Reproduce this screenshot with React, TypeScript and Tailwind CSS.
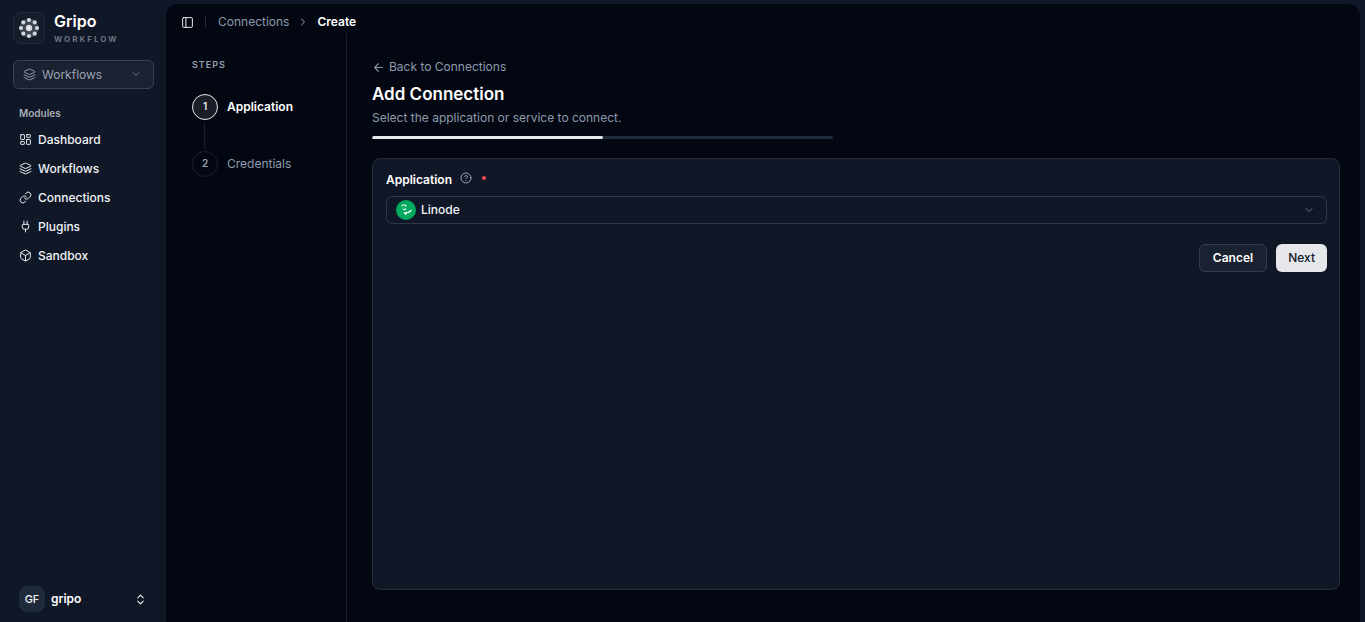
import type { ReactNode } from "react";
import {
  ArrowLeft,
  Box,
  ChevronDown,
  ChevronRight,
  ChevronsUpDown,
  CircleHelp,
  Layers,
  LayoutDashboard,
  Link as LinkIcon,
  PanelLeft,
  Plug,
} from "lucide-react";

const modules = [
  { label: "Dashboard", icon: LayoutDashboard },
  { label: "Workflows", icon: Layers },
  { label: "Connections", icon: LinkIcon },
  { label: "Plugins", icon: Plug },
  { label: "Sandbox", icon: Box },
];

const petals = [
  [12, 4],
  [17.7, 6.3],
  [20, 12],
  [17.7, 17.7],
  [12, 20],
  [6.3, 17.7],
  [4, 12],
  [6.3, 6.3],
];

function GripoMark() {
  return (
    <svg viewBox="0 0 24 24" className="size-6" aria-hidden="true">
      <circle cx="12" cy="12" r="9.5" fill="#e5e7eb" opacity="0.2" />
      <g fill="#d3d6dc">
        {petals.map(([cx, cy]) => (
          <circle key={`${cx}-${cy}`} cx={cx} cy={cy} r="2.1" />
        ))}
        <circle cx="12" cy="12" r="3.2" />
      </g>
      <circle cx="12" cy="12" r="1.2" fill="#ffffff" />
    </svg>
  );
}

function LinodeMark() {
  return (
    <svg viewBox="0 0 20 20" className="size-5" aria-hidden="true">
      <circle cx="10" cy="10" r="10" fill="#00a95c" />
      <g fill="#ffffff">
        <path d="M5 5.400 7.800 4.300l.8.700-2.700 1.300z" />
        <path d="M8.600 4.300l1.700.6.1 1.400-1.600.4z" />
        <path d="M5.700 7.200l.9.500.2 1.300-.8-.5z" />
        <path d="M6.900 9.200l3-.9.200 1.200-1.900.9z" />
        <path d="M7.600 11.800l1.500.9 1.400-1.200 1 .8 3.900-2.900.2 1.500-3.100 2.400-1-.6-1.500 2.200L8 13.400z" />
      </g>
    </svg>
  );
}

function Sidebar() {
  return (
    <aside className="flex w-[166px] shrink-0 flex-col px-3 pt-3 pb-2">
      <div className="flex items-start gap-[9px] pl-px">
        <div className="flex size-8 items-center justify-center rounded-lg border border-[#232b3a] bg-[#151c2b]">
          <GripoMark />
        </div>
        <div className="flex flex-col gap-1 pt-px">
          <span className="text-base leading-4 font-semibold text-white">Gripo</span>
          <span className="text-[8px] leading-3 font-bold tracking-[2px] text-[#6a7282]">
            WORKFLOW
          </span>
        </div>
      </div>

      <div className="relative mt-[15px] ml-px w-[141px] text-[#99a1af]">
        <Layers className="pointer-events-none absolute top-2 left-2.5 size-[13px]" strokeWidth={1.75} />
        <select
          aria-label="Workspace area"
          className="h-[29px] w-full appearance-none rounded-md border border-[#3a4251] bg-[#1a2130] pr-6 pl-7 text-xs outline-none"
        >
          <option>Workflows</option>
        </select>
        <ChevronDown className="pointer-events-none absolute top-2 right-3 size-3 opacity-70" />
      </div>

      <nav aria-label="Modules" className="mt-4 px-1.5">
        <h2 className="pl-px text-[10px] leading-4 font-semibold text-[#a8acb4]">Modules</h2>
        <ul className="mt-1">
          {modules.map(({ label, icon: Icon }) => (
            <li key={label}>
              <a href="#" className="flex h-[29px] items-center gap-1.5 pl-px text-xs font-medium text-[#f3f4f6]">
                <Icon className="size-[13px]" strokeWidth={1.75} />
                {label}
              </a>
            </li>
          ))}
        </ul>
      </nav>

      <button type="button" className="mt-auto flex items-center gap-1.5 py-0.5 pr-[7px] pl-[7px] text-left">
        <span className="flex size-[26px] items-center justify-center rounded-lg bg-[#1e2939] text-[11px] font-medium text-[#f3f4f6]">
          GF
        </span>
        <span className="flex-1 text-xs font-semibold text-white">gripo</span>
        <ChevronsUpDown className="size-[13px] text-[#f3f4f6]" />
      </button>
    </aside>
  );
}

function Step({ number, active, children }: { number: number; active?: boolean; children: ReactNode }) {
  return (
    <div className="flex items-center gap-[9px]">
      <span
        className={
          active
            ? "flex size-[26px] items-center justify-center rounded-full border border-[#e5e7eb] bg-[#1b1e28] pb-0.5 text-[10px] font-semibold text-[#e5e7eb]"
            : "flex size-[26px] items-center justify-center rounded-full border border-[#1b202b] pb-0.5 text-[10px] font-semibold text-[#99a1af]"
        }
      >
        {number}
      </span>
      <span className={active ? "text-xs font-semibold text-white" : "text-xs text-[#8f9bad]"}>{children}</span>
    </div>
  );
}

function Steps() {
  return (
    <aside className="w-[181px] shrink-0 border-r border-[#191e29] pt-6 pl-[26px]">
      <h2 className="text-[9px] leading-4 font-semibold tracking-[1px] text-[#99a1af]">STEPS</h2>
      <ol className="mt-[21px]">
        <li>
          <Step number={1} active>
            Application
          </Step>
          <div className="my-[3px] ml-3 h-[25px] w-px bg-[#1b202b]" />
        </li>
        <li>
          <Step number={2}>Credentials</Step>
        </li>
      </ol>
    </aside>
  );
}

function ConnectionForm() {
  return (
    <form
      onSubmit={(e) => e.preventDefault()}
      className="mt-[19px] flex-1 rounded-lg border border-[#252d3b] bg-[#101828] py-2.5 pr-3 pl-[13px]"
    >
      <div className="flex h-[18px] items-center gap-2">
        <label htmlFor="application" className="pt-1 text-xs font-semibold text-white">
          Application
        </label>
        <CircleHelp className="size-3 text-[#99a1af]" />
        <span className="ml-0.5 size-1 rounded-full bg-[#fb4b51]" />
      </div>
      <div className="relative mt-[9px]">
        <div className="pointer-events-none absolute top-1 left-2.5">
          <LinodeMark />
        </div>
        <select
          id="application"
          required
          className="h-7 w-full appearance-none rounded-md border border-[#303847] bg-transparent pr-8 pl-[34px] text-xs font-medium text-[#f3f4f6] outline-none"
        >
          <option>Linode</option>
        </select>
        <ChevronDown className="pointer-events-none absolute top-2 right-3 size-3 text-[#6a7282]" />
      </div>
      <div className="mt-5 flex justify-end gap-[9px]">
        <button
          type="button"
          className="h-7 rounded-md border border-[#343c4a] bg-[#1a2130] px-[13px] text-xs font-semibold text-white"
        >
          Cancel
        </button>
        <button type="submit" className="h-7 rounded-md bg-[#e5e7eb] px-3 text-xs font-medium text-[#101828]">
          Next
        </button>
      </div>
    </form>
  );
}

export default function App() {
  return (
    <div className="flex min-h-screen bg-[#101828] font-['Inter',sans-serif] antialiased">
      <Sidebar />
      <main className="mt-1 mr-[5px] flex flex-1 flex-col rounded-t-xl bg-[#030712]">
        <header className="flex h-[29px] items-center pt-[7px] pl-[15px]">
          <button type="button" aria-label="Toggle sidebar" className="text-[#f3f4f6]">
            <PanelLeft className="size-[13px]" strokeWidth={1.75} />
          </button>
          <div className="mr-3 ml-[11px] h-3 w-px bg-[#1e2939]" />
          <nav aria-label="Breadcrumb" className="flex items-center gap-2 text-xs">
            <a href="#" className="text-[#8f9bad]">
              Connections
            </a>
            <ChevronRight className="size-3 text-[#99a1af]" />
            <span className="font-semibold text-white">Create</span>
          </nav>
        </header>

        <div className="flex flex-1">
          <Steps />
          <section className="flex flex-1 flex-col pt-[26px] pr-5 pb-8 pl-[25px]">
            <a href="#" className="flex items-center gap-1 self-start text-xs text-[#8f9bad]">
              <ArrowLeft className="size-[13px]" />
              Back to Connections
            </a>
            <h1 className="mt-[7px] text-[17px] leading-6 font-semibold text-white">Add Connection</h1>
            <p className="mt-1 text-xs leading-4 text-[#8f9bad]">Select the application or service to connect.</p>
            <div className="mt-2.5 h-[3px] w-full max-w-[461px] overflow-hidden rounded-full bg-[#1e2939]">
              <div className="h-full w-1/2 rounded-full bg-[#e5e7eb]" />
            </div>
            <ConnectionForm />
          </section>
        </div>
      </main>
    </div>
  );
}
